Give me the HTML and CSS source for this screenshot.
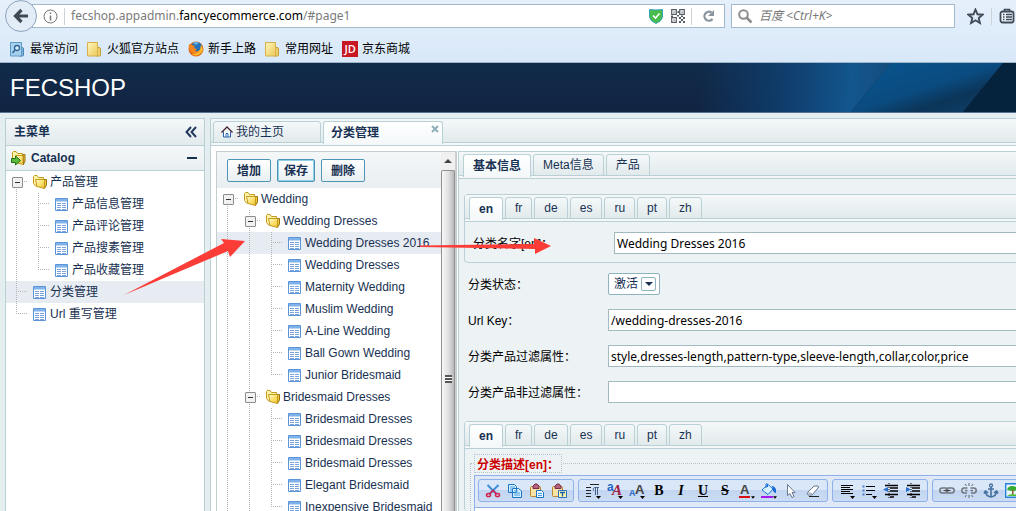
FILE: index.html
```html
<!DOCTYPE html>
<html lang="zh-CN">
<head>
<meta charset="utf-8">
<title>FECSHOP</title>
<link rel="stylesheet" href="styles.css">
</head>
<body>
<svg class="defs" aria-hidden="true">
  <defs>
    <linearGradient id="gold" x1="0" y1="0" x2="1" y2="1"><stop offset="0" stop-color="#fffbd0"/><stop offset=".55" stop-color="#fbe06a"/><stop offset="1" stop-color="#e8bb2a"/></linearGradient>
    <linearGradient id="soft" x1="0" y1="0" x2="1" y2="1"><stop offset="0" stop-color="#fff6bd"/><stop offset="1" stop-color="#ecc95a"/></linearGradient>
    <symbol id="folder" viewBox="0 0 16 16">
      <path d="M1.500 9.500V2.500L2.500 1.500H5L6.500 3.500H11.500V6L4 12.500z" fill="#fff3a8" stroke="#c49a1c"/>
      <path d="M12 5.500h2.500V11l-2 3.500z" fill="#f0c83c" stroke="#9c7412"/>
      <path d="M3.500 5.500h8q1 0 1 1v8L5 12.500z" fill="url(#gold)" stroke="#c49a1c"/>
    </symbol>
    <symbol id="sheet" viewBox="0 0 14 14">
      <path d="M.5.5h12v12H.5z" fill="#fff" stroke="#5b94d8"/>
      <path d="M1 1h11v2.500H1z" fill="#7fb2ea"/>
      <path d="M2 5.500h4M7 5.500h4M2 7.500h4M7 7.500h4M2 9.500h4M7 9.500h4M2 11.500h4M7 11.500h4" stroke="#7aa3dc"/>
    </symbol>
    <symbol id="bookfolder" viewBox="0 0 14 15">
      <path d="M10 5.500h2.500q1 0 1 1.500v6q0 1-1 1H9z" fill="#edcf6b" stroke="#c49e34"/>
      <path d="M.5.5h10v13.500H.5z" fill="url(#soft)" stroke="#d6b04a"/>
    </symbol>
    <symbol id="drop" viewBox="0 0 5 3"><path d="M0 0h5L2.500 3z" fill="#000"/></symbol>
    <symbol id="paste" viewBox="0 0 16 16">
      <rect x="1.500" y="3.500" width="10" height="10" rx="1" fill="#f8e3a4" stroke="#b98632"/>
      <path d="M4 5.500V3l2-2h2l2 2v2.500z" fill="#b3627e" stroke="#7b2944"/>
    </symbol>
  </defs>
</svg>

<header class="browser">
  <div class="navbar">
    <button class="back" aria-label="Back"><svg width="16" height="16" viewBox="0 0 16 16"><path d="M8.500 2 2.500 8l6 6M3 8h12" fill="none" stroke="#414a54" stroke-width="3.200"/></svg></button>
    <div class="address">
      <svg width="15" height="15" viewBox="0 0 15 15"><circle cx="7.500" cy="7.500" r="6.500" fill="none" stroke="#777"/><path d="M7.500 6.500v5M7.500 3.500v1.500" stroke="#777" stroke-width="1.500"/></svg>
      <span class="sep"></span>
      <span class="url">fecshop.appadmin.<b>fancyecommerce.com</b>/#page1</span>
      <svg width="14" height="15" viewBox="0 0 14 15"><path d="M.5.5 7 1l6.500-.5V8Q13 12 7 14.500 1 12 .5 8z" fill="#48bd4c" stroke="#37a3bd"/><path d="m4 6.500 2.500 2.500 4-4.500" fill="none" stroke="#fff" stroke-width="1.600"/></svg>
      <svg width="14" height="14" viewBox="0 0 14 14"><path d="M.7.7h4.600v4.600H.7zM8.700.7h4.600v4.600H8.700zM.7 8.700h4.600v4.600H.7z" fill="none" stroke="#555c64" stroke-width="1.200"/><path d="M2.500 2.500h1.200v1.200H2.500zM10.500 2.500h1.200v1.200h-1.200zM2.500 10.500h1.200v1.200H2.500zM8 8h2v2H8zM10 10h2v2h-2zM12 8h2v2h-2zM8 12h2v2H8zM12 12h2v2h-2zM6.500 2H8v2H6.500zM6 6h2v1.500H6zM10 6.500h2V8h-2zM0 6.500h2V8H0z" fill="#555c64"/></svg>
      <span class="sep"></span>
      <button class="reload" aria-label="Reload"><svg width="13" height="14" viewBox="0 0 13 14"><path d="M10.500 10A4.500 4.500 0 1 1 9.500 3.500" fill="none" stroke="#8b95a0" stroke-width="2.300"/><path d="M12 1v6H6z" fill="#8b95a0"/></svg></button>
    </div>
    <label class="search"><svg width="15" height="15" viewBox="0 0 15 15"><circle cx="5.500" cy="5.500" r="4.300" fill="none" stroke="#8c8c8c" stroke-width="2"/><path d="m8.500 8.500 5 5" stroke="#8c8c8c" stroke-width="2.500"/></svg><input type="search" placeholder="百度 &lt;Ctrl+K&gt;" aria-label="Search"></label>
    <div class="actions">
      <button aria-label="Bookmark"><svg width="17" height="17" viewBox="0 0 17 17"><path d="m8.500 1.500 2 4.800 5 .4-3.800 3.300 1.200 5-4.400-2.700L4.100 15l1.200-5L1.500 6.700l5-.4z" fill="none" stroke="#414a58" stroke-width="1.900"/></svg></button>
      <span class="sep"></span>
      <button aria-label="Bookmark list"><svg width="16" height="16" viewBox="0 0 16 16"><rect x="1.500" y="3.500" width="13" height="11" rx="2" fill="#eef4fb" stroke="#414a58" stroke-width="1.800"/><path d="M5.500 3V1.500h5V3" fill="none" stroke="#414a58" stroke-width="1.600"/><path d="M4 6.500h1.500M7 6.500h6M4 9h1.500M7 9h6M4 11.500h1.500M7 11.500h6" stroke="#414a58" stroke-width="1.300"/></svg></button>
    </div>
  </div>
  <nav class="bookmarks">
    <a href="#"><svg width="14" height="15" viewBox="0 0 14 15"><path d="M10 5.500h2.500q1 0 1 1.500v6q0 1-1 1H9z" fill="#7db4dc" stroke="#4b86b5"/><path d="M.5.5h11v13.500H.5z" fill="#a6d0ee" stroke="#5f9ac7"/><circle cx="7" cy="6" r="2.500" fill="#d8ecfa" stroke="#2e6797" stroke-width="1.300"/><path d="m5 8-2.500 3" stroke="#2e6797" stroke-width="1.600"/></svg>最常访问</a>
    <a href="#"><svg width="14" height="15"><use href="#bookfolder"/></svg>火狐官方站点</a>
    <a href="#" class="near"><svg width="16" height="16" viewBox="0 0 16 16"><circle cx="8" cy="8" r="7.500" fill="#e0661a"/><circle cx="8.500" cy="6.500" r="5.500" fill="#2372b9"/><path d="M5 2q3-2 6 0L8 4z" fill="#67b9e6"/><path d="M1 3q1 1 3 1l3 1-1 2 3 1-2 2q2 1 5-1 1 3-3 4-5 1-7-4-2-2-1-6z" fill="#f5851f"/><path d="M13 4q4 6-1 9-5 3-8 0 8 1 9-9z" fill="#fbb829"/></svg>新手上路</a>
    <a href="#"><svg width="14" height="15"><use href="#bookfolder"/></svg>常用网址</a>
    <a href="#" class="near"><span class="jd">JD</span>京东商城</a>
  </nav>
</header>

<div class="banner">
  <h1>FECSHOP</h1>
  <svg class="rays" viewBox="0 0 316 49" preserveAspectRatio="none" aria-hidden="true">
    <defs>
      <linearGradient id="glow" gradientUnits="userSpaceOnUse" x1="0" y1="0" x2="190" y2="12"><stop offset="0" stop-color="#0e3f70" stop-opacity="0"/><stop offset=".35" stop-color="#0e3f70" stop-opacity=".7"/><stop offset=".8" stop-color="#12568f"/><stop offset="1" stop-color="#164c7d"/></linearGradient>
      <linearGradient id="ray" x1="0" y1="0" x2="1" y2="1"><stop offset="0" stop-color="#07568f"/><stop offset=".5" stop-color="#0a4b80"/><stop offset=".7" stop-color="#0c3558"/><stop offset="1" stop-color="#0c406d"/></linearGradient>
    </defs>
    <path d="M0 0h191L151 49H0z" fill="url(#glow)"/>
    <path d="M191 0h112l-40 49H151z" fill="url(#ray)"/>
    <path d="M303 0h13v49h-53z" fill="#06233e"/>
  </svg>
</div>

<div class="workspace">
  <aside class="menu">
    <h2 class="menu-title">主菜单<svg width="12" height="12" viewBox="0 0 12 12"><path d="M6 1 1.500 6 6 11M11 1 6.500 6l4.500 5" fill="none" stroke="#1d3558" stroke-width="1.900"/></svg></h2>
    <h3 class="menu-group"><svg width="16" height="16" viewBox="0 0 16 16"><path d="M1.500 9V2.500L2.500 1.500H5L6.500 3.500h5V12H3z" fill="#fff3a8" stroke="#c49a1c"/><path d="M5 5.500h6.500q1 0 1 1v8L6 13z" fill="url(#gold)" stroke="#c49a1c"/><path d="M12 4.500h2V11l-1.500 3.500z" fill="#f0c83c" stroke="#9c7412"/><path d="M.5 8.500h4V6l5 4.500-5 4.500v-2.500h-4z" fill="#5cbb3d" stroke="#22701a"/></svg><span>Catalog</span><i class="minus"></i></h3>
    <ul class="tree">
      <li><i class="box"></i><svg class="fold"><use href="#folder"/></svg>产品管理</li>
      <li><i class="v"></i><i class="t"></i><svg class="leaf"><use href="#sheet"/></svg>产品信息管理</li>
      <li><i class="v"></i><i class="t"></i><svg class="leaf"><use href="#sheet"/></svg>产品评论管理</li>
      <li><i class="v"></i><i class="t"></i><svg class="leaf"><use href="#sheet"/></svg>产品搜素管理</li>
      <li><i class="v"></i><i class="t end"></i><svg class="leaf"><use href="#sheet"/></svg>产品收藏管理</li>
      <li class="on"><i class="t"></i><svg class="leaf"><use href="#sheet"/></svg>分类管理</li>
      <li><i class="t end"></i><svg class="leaf"><use href="#sheet"/></svg>Url 重写管理</li>
    </ul>
  </aside>

  <main class="main">
    <nav class="tabs">
      <button class="home"><svg width="12" height="12" viewBox="0 0 12 12"><path d="M2.500 5.500v5.500h7V5.500" fill="#fff" stroke="#2b5f9e"/><path d="M5 11V7.500h2V11" fill="none" stroke="#2b72bd"/><path d="M.5 6.500 6 1l5.500 5.500" fill="none" stroke="#4a2638" stroke-width="1.300"/></svg>我的主页</button>
      <button class="cur closable">分类管理<svg class="close" width="8" height="8" viewBox="0 0 8 8"><path d="m1 1 6 6M7 1 1 7" stroke="#8fb0b9" stroke-width="2"/></svg></button>
    </nav>
    <div class="split">
      <section class="category">
        <div class="category-list">
          <div class="buttons"><button>增加</button><button class="focus">保存</button><button>删除</button></div>
          <ul class="tree">
            <li><i class="box"></i><svg class="fold"><use href="#folder"/></svg>Wedding</li>
            <li><i class="v"></i><i class="box mid"></i><svg class="fold"><use href="#folder"/></svg>Wedding Dresses</li>
            <li class="on"><i class="v"></i><i class="v"></i><i class="t"></i><svg class="leaf"><use href="#sheet"/></svg>Wedding Dresses 2016</li>
            <li><i class="v"></i><i class="v"></i><i class="t"></i><svg class="leaf"><use href="#sheet"/></svg>Wedding Dresses</li>
            <li><i class="v"></i><i class="v"></i><i class="t"></i><svg class="leaf"><use href="#sheet"/></svg>Maternity Wedding</li>
            <li><i class="v"></i><i class="v"></i><i class="t"></i><svg class="leaf"><use href="#sheet"/></svg>Muslim Wedding</li>
            <li><i class="v"></i><i class="v"></i><i class="t"></i><svg class="leaf"><use href="#sheet"/></svg>A-Line Wedding</li>
            <li><i class="v"></i><i class="v"></i><i class="t"></i><svg class="leaf"><use href="#sheet"/></svg>Ball Gown Wedding</li>
            <li><i class="v"></i><i class="v"></i><i class="t end"></i><svg class="leaf"><use href="#sheet"/></svg>Junior Bridesmaid</li>
            <li><i class="v"></i><i class="box mid"></i><svg class="fold"><use href="#folder"/></svg>Bridesmaid Dresses</li>
            <li><i class="v"></i><i class="v"></i><i class="t"></i><svg class="leaf"><use href="#sheet"/></svg>Bridesmaid Dresses</li>
            <li><i class="v"></i><i class="v"></i><i class="t"></i><svg class="leaf"><use href="#sheet"/></svg>Bridesmaid Dresses</li>
            <li><i class="v"></i><i class="v"></i><i class="t"></i><svg class="leaf"><use href="#sheet"/></svg>Bridesmaid Dresses</li>
            <li><i class="v"></i><i class="v"></i><i class="t"></i><svg class="leaf"><use href="#sheet"/></svg>Elegant Bridesmaid</li>
            <li><i class="v"></i><i class="v"></i><i class="t end"></i><svg class="leaf"><use href="#sheet"/></svg>Inexpensive Bridesmaid</li>
          </ul>
        </div>
        <div class="scrollbar"><span class="up"></span><span class="thumb"><i></i></span></div>
      </section>

      <section class="editor">
        <nav class="tabs"><button class="cur">基本信息</button><button>Meta信息</button><button>产品</button></nav>
        <form class="form">
          <div class="panel">
            <nav class="tabs"><button type="button" class="cur">en</button><button type="button">fr</button><button type="button">de</button><button type="button">es</button><button type="button">ru</button><button type="button">pt</button><button type="button">zh</button></nav>
            <div class="panel-body"><div class="field"><label for="name">分类名字[en]<span class="colon">：</span></label><input id="name" type="text" value="Wedding Dresses 2016"></div></div>
          </div>
          <div class="fields">
            <div class="field"><label for="status">分类状态<span class="colon">：</span></label><span class="pick"><select id="status"><option>激活</option></select><i></i></span></div>
            <div class="field"><label for="key">Url Key<span class="colon">：</span></label><input id="key" type="text" value="/wedding-dresses-2016"></div>
            <div class="field"><label for="filter">分类产品过滤属性<span class="colon">：</span></label><input id="filter" type="text" value="style,dresses-length,pattern-type,sleeve-length,collar,color,price"></div>
            <div class="field"><label for="nofilter">分类产品非过滤属性<span class="colon">：</span></label><input id="nofilter" type="text"></div>
          </div>
          <div class="panel grow">
            <nav class="tabs"><button type="button" class="cur">en</button><button type="button">fr</button><button type="button">de</button><button type="button">es</button><button type="button">ru</button><button type="button">pt</button><button type="button">zh</button></nav>
            <fieldset>
              <legend>分类描述[en]<span class="colon">：</span></legend>
              <div class="rich">
                <div class="toolbar">
                  <div class="group">
                    <button type="button" aria-label="Cut"><svg viewBox="0 0 16 16"><path d="m2.500 2 9 9M13.500 2l-9 9" stroke="#3d8fdb" stroke-width="2"/><ellipse cx="3.500" cy="12" rx="2" ry="1.600" fill="none" stroke="#d2214c" stroke-width="1.500"/><ellipse cx="12.500" cy="12" rx="2" ry="1.600" fill="none" stroke="#d2214c" stroke-width="1.500"/><path d="m5 10.500 3-3 3 3" stroke="#d2214c" fill="none" stroke-width="1.600"/></svg></button>
                    <button type="button" aria-label="Copy"><svg viewBox="0 0 16 16"><path d="M1.500 1.500h6l2 2v6h-8zM5.500 5.500h6l3 2.500v6.500h-9z" fill="#d6f0ff" stroke="#1b75c9"/><path d="M3 4h5M3 6h3M3 8h2M7 8h4M7 10h6M7 12h6" stroke="#48a2e4"/></svg></button>
                    <button type="button" aria-label="Paste"><svg viewBox="0 0 16 16"><use href="#paste"/><path d="M7.500 7.500h5l2 2v5h-7z" fill="#e8f7ff" stroke="#1b75c9"/><path d="M9 10.500h4M9 12.500h4" stroke="#48a2e4"/></svg></button>
                    <button type="button" aria-label="Paste text"><svg viewBox="0 0 16 16"><use href="#paste"/><path d="M7.500 7.500h8v7h-8z" fill="#fff7a3" stroke="#2b6fc4"/><path d="M9 9.500h5M11.500 9.500v4" stroke="#1761b5" stroke-width="1.400"/></svg></button>
                  </div>
                  <div class="group">
                    <button type="button" aria-label="Block tag"><svg viewBox="0 0 16 16"><path d="M1 4.500h5M1 7.500h5M1 10.500h5M1 13.500h5M5 1.500h9" stroke="#222" stroke-width="1.200"/><path d="M9 8q-2-3 1-3.500h4M10.500 4.500V12M12.500 4.500V12" fill="none" stroke="#486389"/><use href="#drop" x="11" y="13" width="5" height="3"/></svg></button>
                    <button type="button" aria-label="Font"><svg viewBox="0 0 16 16"><text x="0" y="8" class="ga">a</text><text x="5" y="12" class="gb">A</text><use href="#drop" x="11" y="13" width="5" height="3"/></svg></button>
                    <button type="button" aria-label="Font size"><svg viewBox="0 0 16 16"><text x="0" y="13" class="gc">A</text><text x="6" y="11" class="gd">A</text><use href="#drop" x="11" y="13" width="5" height="3"/></svg></button>
                    <button type="button" class="b">B</button>
                    <button type="button" class="b it">I</button>
                    <button type="button" class="b un">U</button>
                    <button type="button" class="b st">S</button>
                    <button type="button" aria-label="Font colour"><svg viewBox="0 0 16 16"><text x="1" y="11" class="gd">A</text><path d="M0 14h11" stroke="#d90d13" stroke-width="2.200"/><use href="#drop" x="12" y="13" width="4" height="3"/></svg></button>
                    <button type="button" aria-label="Background"><svg viewBox="0 0 16 16"><path d="m1 7 6-5.500L12 6l-5 5.500z" fill="#d8f3ff" stroke="#1b75d9"/><path d="M5 5V1.500Q5 0 6.500 1V4" fill="none" stroke="#1669d4"/><path d="M11 3.500q4 0 3.500 6-2 0-2.500-4" fill="#1669d4" stroke="#1669d4"/><path d="M0 14h12" stroke="#a01bec" stroke-width="2.200"/><use href="#drop" x="12" y="13" width="4" height="3"/></svg></button>
                    <button type="button" aria-label="Select all"><svg viewBox="0 0 16 16"><path d="M4.500 1.500v11l2.500-2 2 4 2-1-2-4h3z" fill="#fff" stroke="#6c7890"/></svg></button>
                    <button type="button" aria-label="Remove format"><svg viewBox="0 0 16 16"><path d="m2 10 6-6q1-1 2-1h3q1 1 0 2l-6 7H3z" fill="#fff" stroke="#697487"/><path d="m2 10 5 2v-2L3 9z" fill="#a9b6c9"/><path d="M4 13.500h10" stroke="#222"/></svg></button>
                  </div>
                  <div class="group">
                    <button type="button" aria-label="Align"><svg viewBox="0 0 16 16"><path d="M2 2.500h12M2 4.500h9M2 6.500h12M2 8.500h9M2 10.500h12" stroke="#000"/><use href="#drop" x="11" y="13" width="5" height="3"/></svg></button>
                    <button type="button" aria-label="List"><svg viewBox="0 0 16 16"><path d="M5 3.500h9M5 7.500h9M5 11.500h6" stroke="#000"/><path d="M1.500 2.500h2v2h-2zM1.500 6.500h2v2h-2zM1.500 10.500h2v2h-2z" fill="#4a7cc6"/><use href="#drop" x="11" y="13" width="5" height="3"/></svg></button>
                    <button type="button" aria-label="Outdent"><svg viewBox="0 0 16 16"><path d="M2 2.500h13M7 5h8M7 8h8M2 11.500h13M7 14h4" stroke="#000" stroke-width="1.600"/><path d="M6 0v16" stroke="#000" stroke-dasharray="1 1"/><path d="M5 4v5L0 6.500z" fill="#2670cc"/></svg></button>
                    <button type="button" aria-label="Indent"><svg viewBox="0 0 16 16"><path d="M2 2.500h13M7 5h8M7 8h8M2 11.500h13M7 14h4" stroke="#000" stroke-width="1.600"/><path d="M6 0v16" stroke="#000" stroke-dasharray="1 1"/><path d="M1 4v5l5-2.500z" fill="#2670cc"/></svg></button>
                  </div>
                  <div class="group">
                    <button type="button" aria-label="Link"><svg viewBox="0 0 16 16"><rect x=".8" y="5" width="8" height="5" rx="2.500" fill="none" stroke="#70777f" stroke-width="1.500"/><rect x="7.200" y="5" width="8" height="5" rx="2.500" fill="none" stroke="#70777f" stroke-width="1.500"/><path d="M4.500 7.500h7" stroke="#444"/></svg></button>
                    <button type="button" aria-label="Unlink"><svg viewBox="0 0 16 16"><path d="M6.500 5H3.300a2.500 2.500 0 0 0 0 5H6M9.500 5h3.200a2.500 2.500 0 0 1 0 5H10M4 7.500h2.500M9.500 7.500H12" fill="none" stroke="#70777f" stroke-width="1.500"/><path d="M8 0v3M4 1l1.500 2M12 1l-1.500 2M8 12v3M4 14l1.500-2M12 14l-1.500-2" stroke="#666"/></svg></button>
                    <button type="button" aria-label="Anchor"><svg viewBox="0 0 16 16"><circle cx="8" cy="2.500" r="1.500" fill="none" stroke="#45719e" stroke-width="1.300"/><path d="M8 4v10M5 6h6M2.500 8.500Q3 13.500 8 14q5-.5 5.500-5.500M1 10.500l1.500-2.500L5 10M15 10.500 13.500 8 11 10" fill="none" stroke="#45719e" stroke-width="1.600"/></svg></button>
                    <button type="button" aria-label="Image"><svg viewBox="0 0 16 16"><path d="M.7.7h14.600v13.600H.7z" fill="#e7f6ff" stroke="#2682d9" stroke-width="1.400"/><path d="M2 7q1-4 5-4 5 0 6 4-4 1-5 1-3 0-6-1z" fill="#3bab32"/><path d="M7 7h1.500v4H7z" fill="#895a28"/><path d="M2 13q5-4 12 0z" fill="#55bc39"/></svg></button>
                  </div>
                </div>
                <div class="canvas"></div>
              </div>
            </fieldset>
          </div>
        </form>
      </section>
    </div>
  </main>
</div>

<svg class="arrows" width="560" height="300" viewBox="0 0 560 300" aria-hidden="true">
  <path d="M124 295 224 243l-3-4 24 2-15 16-2-6z" fill="#fb3c37"/>
  <path d="M420 245.500 534 244v-6l17 8-16 8v-5l-115-2z" fill="#fb3c37"/>
</svg>
</body>
</html>
```
FILE: styles.css
```css
* { box-sizing: border-box; }
body {
  margin: 0;
  height: 100vh;
  overflow: hidden;
  display: flex;
  flex-direction: column;
  position: relative;
  background: #e4edef;
  font: 12px/18px "Liberation Sans", "Noto Sans CJK SC", sans-serif;
  color: #183152;
}
button, input, select { font: inherit; color: inherit; margin: 0; }
button { border: 0; padding: 0; background: none; }
ul, h1, h2, h3 { margin: 0; padding: 0; list-style: none; }
svg { flex: none; }
.defs { position: absolute; width: 0; height: 0; }

/* browser chrome */
.browser {
  flex: none;
  height: 63px;
  background: linear-gradient(#e6f0fb, #d8e8f8);
  border-bottom: 1px solid #9db4c9;
  color: #000;
}
.navbar { display: flex; align-items: center; height: 32px; padding-left: 5px; }
.back {
  width: 32px;
  height: 32px;
  display: grid;
  place-items: center;
  border: 1px solid #8ea4bc;
  border-radius: 50%;
  background: #e3edf8;
  z-index: 1;
}
.address, .search {
  display: flex;
  align-items: center;
  height: 24px;
  background: #fff;
  border: 1px solid #a4b8cc;
}
.address {
  flex: 1;
  margin-left: -5px;
  padding: 0 6px 0 10px;
  gap: 6px;
  font: 12px/20px "Noto Sans", sans-serif;
  color: #7b7b7b;
}
.address b { font-weight: 400; color: #000; }
.url { flex: 1; white-space: nowrap; }
.address svg + svg { margin-left: 2px; }
.sep { width: 1px; height: 17px; background: #ccd2d8; }
.reload { width: 20px; height: 16px; display: grid; place-items: center; }
.search { width: 224px; margin-left: 6px; padding-left: 6px; gap: 6px; }
.search input {
  flex: 1;
  min-width: 0;
  padding: 0;
  border: 0;
  background: none;
  outline: none;
  font: italic 12px/18px "Noto Sans", "Noto Sans CJK SC", sans-serif;
}
.search input::placeholder { color: #777; opacity: 1; }
.actions { flex: none; width: 61px; display: flex; align-items: center; gap: 7px; padding-left: 12px; overflow: hidden; }
.actions button { display: grid; }
.bookmarks { display: flex; gap: 9px; align-items: center; height: 34px; padding-left: 10px; }
.bookmarks a { display: flex; align-items: center; gap: 6px; color: #000; text-decoration: none; white-space: nowrap; }
.bookmarks .near { gap: 4px; }
.jd { width: 16px; height: 16px; background: #c91623; color: #fff; font: 600 11px/16px "Open Sans", sans-serif; text-align: center; }

/* banner */
.banner {
  flex: none;
  height: 50px;
  display: flex;
  justify-content: space-between;
  background: linear-gradient(#112b4a, #112442);
  border-bottom: 1px solid #557491;
}
.banner h1 { padding-left: 10px; font-size: 24px; line-height: 49px; font-weight: 400; color: #fff; }
.rays { width: 316px; height: 49px; }

.workspace { flex: 1; min-height: 0; display: flex; gap: 5px; padding: 5px 0 0 5px; }

/* left menu */
.menu { flex: none; width: 200px; border: 1px solid #b8d0d6; border-bottom: 0; background: #fff; }
.menu-title, .menu-group {
  display: flex;
  align-items: center;
  border-bottom: 1px solid #b8d0d6;
  background: linear-gradient(#f3f7f8, #e2eaec);
  font-size: 12px;
}
.menu-title { height: 27px; padding: 0 7px 0 8px; justify-content: space-between; }
.menu-group { height: 25px; padding: 0 7px 0 5px; gap: 4px; background: linear-gradient(#f4f8f9, #e9eff1); }
.menu-group span { flex: 1; }
.minus { width: 10px; height: 2px; background: #183152; }

/* trees */
.tree li { display: flex; align-items: center; height: 22px; white-space: nowrap; }
.tree .on { background: #e7ebf2; }
.tree i {
  flex: none;
  width: 22px;
  height: 22px;
  background-repeat: no-repeat;
}
.tree .v, .tree .t, .tree .box {
  --down: repeating-linear-gradient(#b4b4b4 0 1px, transparent 1px 2px);
  --side: repeating-linear-gradient(90deg, #b4b4b4 0 1px, transparent 1px 2px);
}
.tree .v { background-image: var(--down); background-size: 1px 22px; background-position: 10px 0; }
.tree .t { background-image: var(--down), var(--side); background-size: 1px 22px, 11px 1px; background-position: 10px 0, 10px 10px; }
.tree .t.end { background-size: 1px 11px, 11px 1px; }
.tree .box {
  display: grid;
  place-items: start;
  padding: 6px 0 0 6px;
  background-image: var(--down), var(--side);
  background-size: 1px 6px, 6px 1px;
  background-position: 10px 16px, 16px 10px;
}
.tree .box.mid { background-size: 1px 22px, 6px 1px; background-position: 10px 0, 16px 10px; }
.tree .box::before {
  content: "";
  width: 9px;
  height: 9px;
  border: 1px solid #8c8c8c;
  border-radius: 1px;
  background: linear-gradient(#333, #333) center / 5px 1px no-repeat, #f1f1f1;
}
.fold { width: 16px; height: 16px; margin: 0 2px 0 4px; }
.leaf { width: 14px; height: 14px; margin: 2px 3px 0 5px; }

/* tab strips */
.tabs {
  flex: none;
  position: relative;
  display: flex;
  gap: 2px;
  height: 28px;
  padding: 2px 0 0 4px;
  border-top: 1px solid #b8d0d6;
  border-bottom: 1px solid #b8d0d6;
  background: linear-gradient(#f4f8f9 0, #e1eaec 23px, #b8d0d6 23px, #b8d0d6 24px, #f4f8f9 24px);
}
.tabs button {
  height: 22px;
  padding: 0 9px;
  border: 1px solid #b8d0d6;
  border-radius: 3px 3px 0 0;
  background: linear-gradient(#f4f8f9, #e2eaec);
  line-height: 20px;
  white-space: nowrap;
}
.tabs .cur { height: 23px; border-bottom: 0; background: linear-gradient(#fff, #f4f8f9); font-weight: 700; }

.main { flex: 1; min-width: 0; display: flex; flex-direction: column; border-left: 1px solid #b8d0d6; background: #fff; }
.main > .tabs { padding-left: 2px; }
.home { display: flex; align-items: center; gap: 3px; width: 108px; }
.tabs .home { padding: 0 7px; }
.tabs .closable { position: relative; width: 120px; padding: 0 7px; text-align: left; }
.close { position: absolute; top: 3px; right: 3px; }
.split { flex: 1; min-height: 0; display: flex; padding: 5px 0 0 5px; gap: 1px; }

/* category column */
.category { flex: none; display: flex; width: 241px; border: 1px solid #c4cdd0; border-bottom: 0; overflow: hidden; }
.category-list { flex: 1; min-width: 0; overflow: hidden; }
.buttons { display: flex; gap: 6px; height: 36px; padding: 7px 10px; background: linear-gradient(#f3f7f8, #e9eef2); }
.buttons button {
  height: 23px;
  padding: 0 9px;
  border: 1px solid #4e94b4;
  border-radius: 2px;
  background: linear-gradient(#fff, #e8eff2);
  line-height: 20px;
  font-weight: 700;
}
.buttons .focus { padding: 0 6px; box-shadow: inset 0 0 0 1px #8fd0e8; }
.scrollbar { width: 15px; display: flex; flex-direction: column; background: #f0f0f0; border-right: 1px solid #cfcfcf; }
.up { height: 18px; display: grid; place-items: center; }
.up::before { content: ""; border: 4px solid transparent; border-top: 0; border-bottom: 4px solid #444; }
.thumb {
  flex: 1;
  display: grid;
  justify-items: center;
  padding-top: 204px;
  border: 1px solid #909090;
  border-bottom: 0;
  border-radius: 2px 2px 0 0;
  background: linear-gradient(90deg, #f7f7f7, #e2e2e4 50%, #b9b9bb);
}
.thumb i { width: 7px; height: 8px; background: repeating-linear-gradient(#555 0 2px, #fff 2px 3px); }

/* editor column */
.editor { flex: 1; min-width: 0; display: flex; flex-direction: column; background: #edf3f5; border-left: 1px solid #b8d0d6; }
.form { flex: 1; min-height: 0; display: flex; flex-direction: column; padding: 15px 0 0 5px; }
.panel { flex: none; border-left: 1px solid #b8d0d6; border-radius: 4px 0 0 4px; overflow: hidden; }
.panel-body { padding: 10px 0 8px 8px; border-bottom: 1px solid #b8d0d6; border-radius: 0 0 0 4px; }
.grow { flex: 1; min-height: 0; display: flex; flex-direction: column; }
.field { display: flex; align-items: center; height: 22px; color: #000; }
.field label { flex: none; width: 140px; }
.field input {
  flex: 1;
  min-width: 0;
  height: 22px;
  padding: 0 2px;
  border: 1px solid #a2b9c0;
  border-right: 0;
  background: #fff;
  font: 12px/18px "Noto Sans", sans-serif;
}
.panel-body .field label { width: 141px; }
.colon { font-family: "Noto Sans CJK TC", sans-serif; }
.fields { flex: none; display: grid; gap: 14px; padding: 10px 0 18px 4px; }
.pick { position: relative; width: 52px; height: 22px; }
.pick select { width: 52px; height: 22px; appearance: none; padding: 0 5px; border: 1px solid #8eb3be; border-radius: 2px; background: #fff; color: #183152; }
.pick i { position: absolute; right: 4px; top: 4px; width: 15px; height: 14px; display: grid; place-items: center; border: 1px solid #8eb3be; border-radius: 2px; pointer-events: none; }
.pick i::before { content: ""; border: 4px solid transparent; border-bottom: 0; border-top: 4px solid #183152; }

fieldset { flex: 1; min-width: 0; margin: 5px 0 0 5px; padding: 2px 0 0 3px; border: 1px dotted #b3c6cb; border-right: 0; border-bottom: 0; }
legend { height: 19px; padding: 0 2px; border: 1px dotted #b3c6cb; color: #c00; font-weight: 700; line-height: 17px; }
.rich { border: 1px solid #8fb0e8; border-right: 0; }
.toolbar { display: flex; gap: 4px; height: 32px; padding: 3px; background: #dfe8f7; border-bottom: 1px solid #8fb0e8; overflow: hidden; }
.group { flex: none; display: flex; height: 23px; padding: 0 3px; border: 1px solid #8fb0e8; border-radius: 3px; background: linear-gradient(#dae7f8 0 46%, #c2d5f0 46%, #cbdcf4); }
.group button { width: 22px; height: 21px; display: grid; place-items: center; color: #000; }
.group svg { width: 16px; height: 16px; overflow: visible; }
.group .b { font: 700 14px/20px "Liberation Serif", serif; }
.group .it { font-style: italic; }
.group .un { text-decoration: underline; }
.group .st { text-decoration: line-through; }
.ga { font: 700 12px "Liberation Sans", sans-serif; fill: #2468c8; }
.gb { font: italic 700 15px "Liberation Serif", serif; fill: #a02343; }
.gc { font: 700 9px "Liberation Sans", sans-serif; fill: #2468c8; }
.gd { font: 700 13px "Liberation Sans", sans-serif; fill: #444; }
.canvas { height: 200px; background: #fff; }

.arrows { position: absolute; top: 0; left: 0; pointer-events: none; }
```
